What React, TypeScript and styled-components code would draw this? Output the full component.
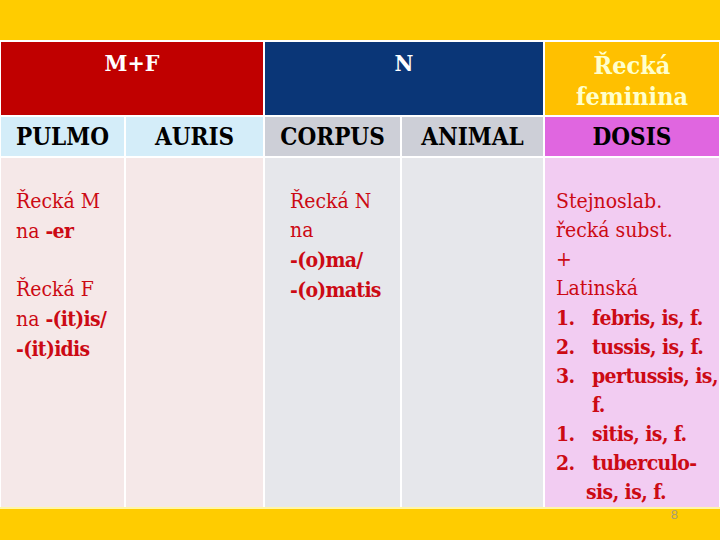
import React from "react";
import styled, { createGlobalStyle } from "styled-components";

const SERIF = `"DejaVu Serif Condensed", "DejaVu Serif", serif`;

const Global = createGlobalStyle`
  html, body { margin: 0; padding: 0; }
  body { width: 720px; height: 540px; overflow: hidden; background: #ffcc00; font-family: ${SERIF}; font-stretch: condensed; }
`;

const Page = styled.div`
  width: 720px;
  height: 540px;
  display: flex;
  flex-direction: column;
  background: #ffcc00;
`;

const TopBar = styled.div`
  height: 40px;
  background: #ffcc00;
`;

const Table = styled.div`
  display: grid;
  grid-template-columns: 123px 137px 135px 141px 174px;
  grid-template-rows: 73px 39px 349px;
  gap: 2px;
  padding: 2px 1px 0 1px;
  background: #ffffff;
`;

const GroupHead = styled.div<{ $bg: string; $color: string; $span: number; $size: number; $top: number }>`
  grid-column: span ${(p) => p.$span};
  background: ${(p) => p.$bg};
  color: ${(p) => p.$color};
  font-family: ${SERIF};
  font-stretch: condensed;
  font-weight: bold;
  font-size: ${(p) => p.$size}px;
  line-height: 31px;
  text-align: center;
  padding-top: ${(p) => p.$top}px;
  box-sizing: border-box;
`;

const ColHead = styled.div<{ $bg: string }>`
  background: ${(p) => p.$bg};
  color: #000000;
  font-family: ${SERIF};
  font-stretch: condensed;
  font-weight: bold;
  font-size: 24px;
  display: flex;
  align-items: center;
  justify-content: center;
`;

const BodyCell = styled.div<{ $bg: string; $pad: number }>`
  background: ${(p) => p.$bg};
  color: #cc0a14;
  font-family: ${SERIF};
  font-stretch: condensed;
  font-size: 21px;
  line-height: 29px;
  padding: 29px 0 0 ${(p) => p.$pad}px;
  box-sizing: border-box;
`;

const Line = styled.div<{ $indent?: number }>`
  white-space: nowrap;
  padding-left: ${(p) => p.$indent ?? 0}px;
`;

const Spacer = styled.div`
  height: 29px;
`;

const B = styled.b`
  font-weight: bold;
  letter-spacing: -0.7px;
`;

const ListRow = styled.div<{ $indent?: number }>`
  display: flex;
  white-space: nowrap;
  font-weight: bold;
  letter-spacing: -0.6px;
  padding-left: ${(p) => p.$indent ?? 0}px;
`;

const Num = styled.span`
  width: 36px;
  flex: none;
`;

const Footer = styled.div`
  flex: 1;
  border-top: 2px solid #fff6a8;
  display: flex;
  justify-content: flex-end;
  padding-right: 42px;
`;

const PageNum = styled.span`
  font-family: "Liberation Sans", sans-serif;
  font-size: 13px;
  color: #a89c78;
  margin-top: -2px;
`;

export default function App() {
  return (
    <>
      <Global />
      <Page>
        <TopBar />
        <Table>
          <GroupHead $span={2} $bg="#c00000" $color="#ffffff" $size={23} $top={5}>M+F</GroupHead>
          <GroupHead $span={2} $bg="#0a3677" $color="#ffffff" $size={23} $top={5}>N</GroupHead>
          <GroupHead $span={1} $bg="#ffc000" $color="#ffffcc" $size={25} $top={8}>
            Řecká<br />feminina
          </GroupHead>

          <ColHead $bg="#d4edf9">PULMO</ColHead>
          <ColHead $bg="#d4edf9">AURIS</ColHead>
          <ColHead $bg="#cdcfd7">CORPUS</ColHead>
          <ColHead $bg="#cdcfd7">ANIMAL</ColHead>
          <ColHead $bg="#e066e0">DOSIS</ColHead>

          <BodyCell $bg="#f5e8e8" $pad={15}>
            <Line>Řecká M</Line>
            <Line>na <B>-er</B></Line>
            <Spacer />
            <Line>Řecká F</Line>
            <Line>na <B>-(it)is/</B></Line>
            <Line><B>-(it)idis</B></Line>
          </BodyCell>
          <BodyCell $bg="#f5e8e8" $pad={15} />
          <BodyCell $bg="#e6e7eb" $pad={25}>
            <Line>Řecká N</Line>
            <Line>na</Line>
            <Line><B>-(o)ma/</B></Line>
            <Line><B>-(o)matis</B></Line>
          </BodyCell>
          <BodyCell $bg="#e6e7eb" $pad={25} />
          <BodyCell $bg="#f2ccf2" $pad={11}>
            <Line>Stejnoslab.</Line>
            <Line>řecká subst.</Line>
            <Line>+</Line>
            <Line>Latinská</Line>
            <ListRow><Num>1.</Num>febris, is, f.</ListRow>
            <ListRow><Num>2.</Num>tussis, is, f.</ListRow>
            <ListRow><Num>3.</Num>pertussis, is,</ListRow>
            <ListRow $indent={36}>f.</ListRow>
            <ListRow><Num>1.</Num>sitis, is, f.</ListRow>
            <ListRow><Num>2.</Num>tuberculo-</ListRow>
            <ListRow $indent={30}>sis, is, f.</ListRow>
          </BodyCell>
        </Table>
        <Footer>
          <PageNum>8</PageNum>
        </Footer>
      </Page>
    </>
  );
}
